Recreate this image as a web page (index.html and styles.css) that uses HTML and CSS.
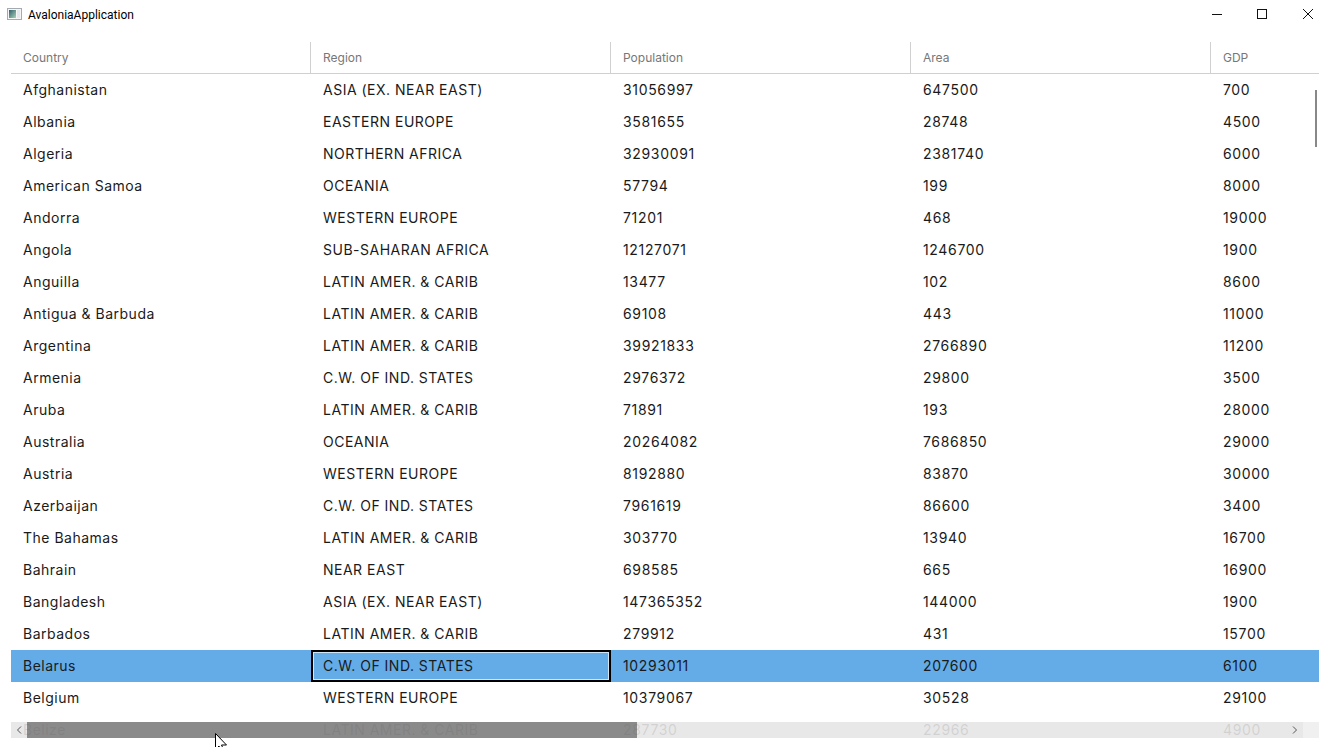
FILE: index.html
```html
<!DOCTYPE html>
<html lang="en">
<head>
    <meta charset="UTF-8">
    <title>AvaloniaApplication</title>
    <link rel="stylesheet" href="styles.css">
</head>
<body>
    <div class="titlebar">
        <svg class="app-icon" width="16" height="16" viewBox="0 0 16 16">
            <defs>
                <linearGradient id="iconFill" x1="0" y1="0" x2="1" y2="1">
                    <stop offset="0" stop-color="#2f5f70"/>
                    <stop offset="1" stop-color="#a9d2b4"/>
                </linearGradient>
            </defs>
            <rect x="0.5" y="1.5" width="14" height="11" fill="#f6f6f6" stroke="#a4aaaf"/>
            <rect x="2" y="3" width="7" height="8" fill="url(#iconFill)"/>
            <rect x="10" y="3" width="3" height="8" fill="#e3e9ec"/>
        </svg>
        <span class="app-title">AvaloniaApplication</span>
        <div class="window-buttons">
            <svg width="46" height="30" viewBox="0 0 46 30"><path d="M19 14.5h10" stroke="#111" fill="none"/></svg>
            <svg width="46" height="30" viewBox="0 0 46 30"><rect x="18.500" y="9.500" width="9" height="9" stroke="#111" fill="none"/></svg>
            <svg width="46" height="30" viewBox="0 0 46 30"><path d="M18 9l10 10M28 9l-10 10" stroke="#111" fill="none"/></svg>
        </div>
    </div>

    <div class="grid">
        <div class="header-row">
            <div class="header-cell">Country</div>
            <div class="header-cell">Region</div>
            <div class="header-cell">Population</div>
            <div class="header-cell">Area</div>
            <div class="header-cell last">GDP</div>
        </div>
        <div class="rows">
            <div class="row"><div class="cell">Afghanistan</div><div class="cell">ASIA (EX. NEAR EAST)</div><div class="cell">31056997</div><div class="cell">647500</div><div class="cell">700</div></div>
            <div class="row"><div class="cell">Albania</div><div class="cell">EASTERN EUROPE</div><div class="cell">3581655</div><div class="cell">28748</div><div class="cell">4500</div></div>
            <div class="row"><div class="cell">Algeria</div><div class="cell">NORTHERN AFRICA</div><div class="cell">32930091</div><div class="cell">2381740</div><div class="cell">6000</div></div>
            <div class="row"><div class="cell">American Samoa</div><div class="cell">OCEANIA</div><div class="cell">57794</div><div class="cell">199</div><div class="cell">8000</div></div>
            <div class="row"><div class="cell">Andorra</div><div class="cell">WESTERN EUROPE</div><div class="cell">71201</div><div class="cell">468</div><div class="cell">19000</div></div>
            <div class="row"><div class="cell">Angola</div><div class="cell">SUB-SAHARAN AFRICA</div><div class="cell">12127071</div><div class="cell">1246700</div><div class="cell">1900</div></div>
            <div class="row"><div class="cell">Anguilla</div><div class="cell">LATIN AMER. &amp; CARIB</div><div class="cell">13477</div><div class="cell">102</div><div class="cell">8600</div></div>
            <div class="row"><div class="cell">Antigua &amp; Barbuda</div><div class="cell">LATIN AMER. &amp; CARIB</div><div class="cell">69108</div><div class="cell">443</div><div class="cell">11000</div></div>
            <div class="row"><div class="cell">Argentina</div><div class="cell">LATIN AMER. &amp; CARIB</div><div class="cell">39921833</div><div class="cell">2766890</div><div class="cell">11200</div></div>
            <div class="row"><div class="cell">Armenia</div><div class="cell">C.W. OF IND. STATES</div><div class="cell">2976372</div><div class="cell">29800</div><div class="cell">3500</div></div>
            <div class="row"><div class="cell">Aruba</div><div class="cell">LATIN AMER. &amp; CARIB</div><div class="cell">71891</div><div class="cell">193</div><div class="cell">28000</div></div>
            <div class="row"><div class="cell">Australia</div><div class="cell">OCEANIA</div><div class="cell">20264082</div><div class="cell">7686850</div><div class="cell">29000</div></div>
            <div class="row"><div class="cell">Austria</div><div class="cell">WESTERN EUROPE</div><div class="cell">8192880</div><div class="cell">83870</div><div class="cell">30000</div></div>
            <div class="row"><div class="cell">Azerbaijan</div><div class="cell">C.W. OF IND. STATES</div><div class="cell">7961619</div><div class="cell">86600</div><div class="cell">3400</div></div>
            <div class="row"><div class="cell">The Bahamas</div><div class="cell">LATIN AMER. &amp; CARIB</div><div class="cell">303770</div><div class="cell">13940</div><div class="cell">16700</div></div>
            <div class="row"><div class="cell">Bahrain</div><div class="cell">NEAR EAST</div><div class="cell">698585</div><div class="cell">665</div><div class="cell">16900</div></div>
            <div class="row"><div class="cell">Bangladesh</div><div class="cell">ASIA (EX. NEAR EAST)</div><div class="cell">147365352</div><div class="cell">144000</div><div class="cell">1900</div></div>
            <div class="row"><div class="cell">Barbados</div><div class="cell">LATIN AMER. &amp; CARIB</div><div class="cell">279912</div><div class="cell">431</div><div class="cell">15700</div></div>
            <div class="row selected"><div class="cell">Belarus</div><div class="cell focused">C.W. OF IND. STATES</div><div class="cell">10293011</div><div class="cell">207600</div><div class="cell">6100</div></div>
            <div class="row"><div class="cell">Belgium</div><div class="cell">WESTERN EUROPE</div><div class="cell">10379067</div><div class="cell">30528</div><div class="cell">29100</div></div>
            <div class="row"><div class="cell">Belize</div><div class="cell">LATIN AMER. &amp; CARIB</div><div class="cell">287730</div><div class="cell">22966</div><div class="cell">4900</div></div>
        </div>

        <div class="vscroll-thumb"></div>
        <div class="hscroll">
            <div class="hscroll-btn">
                <svg width="16" height="16" viewBox="0 0 16 16"><path d="M10 4.500L6.500 8l3.500 3.500" stroke="#555" fill="none"/></svg>
            </div>
            <div class="hscroll-track"><div class="hscroll-thumb"></div></div>
            <div class="hscroll-btn">
                <svg width="16" height="16" viewBox="0 0 16 16"><path d="M6 4.500L9.500 8 6 11.500" stroke="#555" fill="none"/></svg>
            </div>
            <div class="hscroll-corner"></div>
        </div>
    </div>

    <svg class="cursor" width="14" height="20" viewBox="0 0 14 20">
        <path d="M0.500 0.500V16.500L4 13 6.500 18.500 9 17.500 6.500 12H11.500Z" fill="#fff" stroke="#000"/>
    </svg>
</body>
</html>
```

FILE: styles.css
```css
html, body {
    margin: 0;
    height: 100%;
    overflow: hidden;
}
body {
    background-color: #fff;
    color: #1a1a1a;
    font-family: Inter, "Liberation Sans", sans-serif;
    font-size: 14px;
}
.titlebar {
    display: flex;
    align-items: center;
    height: 30px;
    padding-left: 7px;
}
.app-icon {
    margin-right: 5px;
}
.app-title {
    font-family: Roboto, "Liberation Sans", sans-serif;
    font-size: 12px;
    color: #000;
}
.window-buttons {
    display: flex;
    margin-left: auto;
    margin-right: -3px;
}
.grid {
    position: relative;
    margin: 12px 9px 0 11px;
    height: 705px;
    overflow: hidden;
}
.header-row {
    display: grid;
    grid-template-columns: 300px 300px 300px 300px 108px;
    height: 31px;
    border-bottom: 1px solid #d0d0d0;
}
.header-cell {
    display: flex;
    align-items: center;
    padding: 0 12px;
    font-size: 12px;
    color: #777;
    border-right: 1px solid #d0d0d0;
}
.header-cell.last {
    border-right: none;
}
.row {
    display: grid;
    grid-template-columns: 300px 300px 300px 300px 108px;
    height: 32px;
}
.cell {
    display: flex;
    align-items: center;
    padding: 0 12px 2px;
    white-space: nowrap;
    letter-spacing: 0.5px;
}
/* number columns run a bit wider than the text ones */
.cell:nth-child(n+3) {
    letter-spacing: 0.66px;
}
.row.selected {
    background-color: #63ace8;
}
.cell.focused {
    border: 2px solid #000;
    outline: 1px solid #cfe6f8;
    outline-offset: -3px;
    padding: 0 10px 2px;
}
.vscroll-thumb {
    position: absolute;
    top: 48px;
    right: 2px;
    width: 2px;
    height: 57px;
    background-color: #888;
}
.hscroll {
    position: absolute;
    left: 0;
    right: 0;
    top: 680px;
    display: flex;
    height: 16px;
    background-color: rgba(230, 230, 230, 0.9);
}
.hscroll-btn {
    flex: none;
    width: 16px;
    height: 16px;
}
.hscroll-track {
    flex: 1;
}
.hscroll-thumb {
    width: 610px;
    height: 16px;
    background-color: rgba(87, 87, 87, 0.65);
}
.hscroll-corner {
    flex: none;
    width: 16px;
    height: 16px;
    background-color: #f0f0f0;
}
.cursor {
    position: absolute;
    left: 215px;
    top: 733px;
}
```
